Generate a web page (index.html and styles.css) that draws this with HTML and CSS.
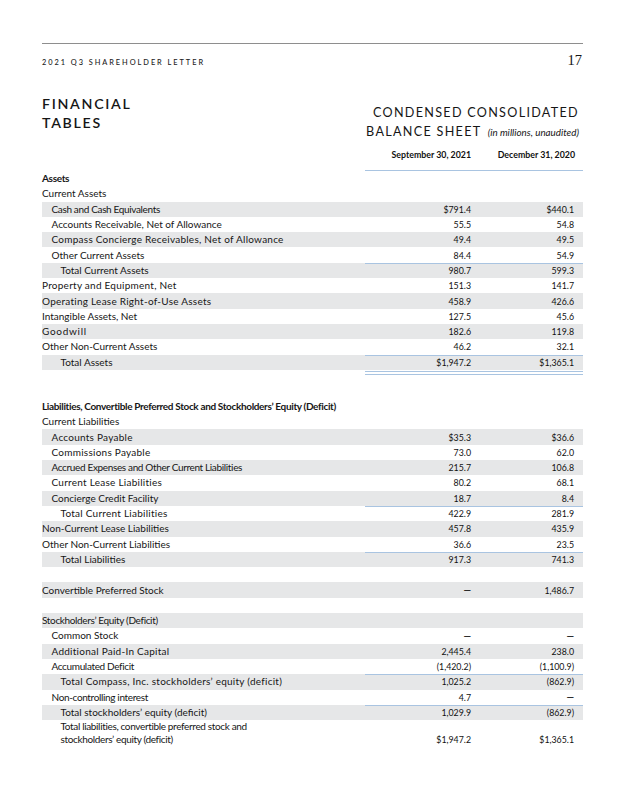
FILE: index.html
```html
<!DOCTYPE html>
<html lang="en">
<head>
<meta charset="utf-8">
<title>2021 Q3 Shareholder Letter — Financial Tables</title>
<link rel="stylesheet" href="styles.css">
</head>
<body>
<div class="page">
  <header class="top">
    <span class="kicker">2021 Q3 SHAREHOLDER LETTER</span>
    <span class="pageno">17</span>
  </header>

  <section class="intro">
    <h1 class="section-title">FINANCIAL<br>TABLES</h1>
    <div class="sheet-title">
      <div class="st-line">CONDENSED CONSOLIDATED</div>
      <div class="st-line">BALANCE SHEET <em class="note">(in millions, unaudited)</em></div>
    </div>
  </section>

  <div class="tbl">
    <div class="row head">
      <div class="lab"></div>
      <div class="v">September 30, 2021</div>
      <div class="v">December 31, 2020</div>
    </div>

    <div class="row"><div class="lab b tight">Assets</div><div class="v"></div><div class="v"></div></div>
    <div class="row"><div class="lab">Current Assets</div><div class="v"></div><div class="v"></div></div>
    <div class="row g"><div class="lab l1 tight">Cash and Cash Equivalents</div><div class="v">$791.4</div><div class="v">$440.1</div></div>
    <div class="row"><div class="lab l1">Accounts Receivable, Net of Allowance</div><div class="v">55.5</div><div class="v">54.8</div></div>
    <div class="row g"><div class="lab l1 wide">Compass Concierge Receivables, Net of Allowance</div><div class="v">49.4</div><div class="v">49.5</div></div>
    <div class="row"><div class="lab l1">Other Current Assets</div><div class="v">84.4</div><div class="v">54.9</div></div>
    <div class="row g rule"><div class="lab l2">Total Current Assets</div><div class="v">980.7</div><div class="v">599.3</div></div>
    <div class="row"><div class="lab wide">Property and Equipment, Net</div><div class="v">151.3</div><div class="v">141.7</div></div>
    <div class="row g"><div class="lab wide">Operating Lease Right-of-Use Assets</div><div class="v">458.9</div><div class="v">426.6</div></div>
    <div class="row"><div class="lab">Intangible Assets, Net</div><div class="v">127.5</div><div class="v">45.6</div></div>
    <div class="row g"><div class="lab xwide">Goodwill</div><div class="v">182.6</div><div class="v">119.8</div></div>
    <div class="row"><div class="lab">Other Non-Current Assets</div><div class="v">46.2</div><div class="v">32.1</div></div>
    <div class="row g rule"><div class="lab l2">Total Assets</div><div class="v">$1,947.2</div><div class="v">$1,365.1</div></div>
    <div class="row dbl"><div class="lab"></div><div class="v"></div><div class="v"></div></div>

    <div class="row gap-top"><div class="lab b tight">Liabilities, Convertible Preferred Stock and Stockholders’ Equity (Deficit)</div></div>
    <div class="row"><div class="lab">Current Liabilities</div><div class="v"></div><div class="v"></div></div>
    <div class="row g"><div class="lab l1 wide">Accounts Payable</div><div class="v">$35.3</div><div class="v">$36.6</div></div>
    <div class="row"><div class="lab l1 wide">Commissions Payable</div><div class="v">73.0</div><div class="v">62.0</div></div>
    <div class="row g"><div class="lab l1 tight">Accrued Expenses and Other Current Liabilities</div><div class="v">215.7</div><div class="v">106.8</div></div>
    <div class="row"><div class="lab l1 wide">Current Lease Liabilities</div><div class="v">80.2</div><div class="v">68.1</div></div>
    <div class="row g"><div class="lab l1">Concierge Credit Facility</div><div class="v">18.7</div><div class="v">8.4</div></div>
    <div class="row rule"><div class="lab l2 wide">Total Current Liabilities</div><div class="v">422.9</div><div class="v">281.9</div></div>
    <div class="row g"><div class="lab">Non-Current Lease Liabilities</div><div class="v">457.8</div><div class="v">435.9</div></div>
    <div class="row"><div class="lab">Other Non-Current Liabilities</div><div class="v">36.6</div><div class="v">23.5</div></div>
    <div class="row g rule"><div class="lab l2">Total Liabilities</div><div class="v">917.3</div><div class="v">741.3</div></div>
    <div class="row"><div class="lab"></div><div class="v"></div><div class="v"></div></div>
    <div class="row g"><div class="lab">Convertible Preferred Stock</div><div class="v"><span class="dash">—</span></div><div class="v">1,486.7</div></div>
    <div class="row"><div class="lab"></div><div class="v"></div><div class="v"></div></div>
    <div class="row g"><div class="lab tight">Stockholders’ Equity (Deficit)</div><div class="v"></div><div class="v"></div></div>
    <div class="row"><div class="lab l1">Common Stock</div><div class="v"><span class="dash">—</span></div><div class="v"><span class="dash">—</span></div></div>
    <div class="row g"><div class="lab l1 wide">Additional Paid-In Capital</div><div class="v">2,445.4</div><div class="v">238.0</div></div>
    <div class="row"><div class="lab l1 tight">Accumulated Deficit</div><div class="v">(1,420.2)</div><div class="v">(1,100.9)</div></div>
    <div class="row g rule"><div class="lab l2 wide">Total Compass, Inc. stockholders’ equity (deficit)</div><div class="v">1,025.2</div><div class="v">(862.9)</div></div>
    <div class="row"><div class="lab l1 tight">Non-controlling interest</div><div class="v">4.7</div><div class="v"><span class="dash">—</span></div></div>
    <div class="row g rule"><div class="lab l2">Total stockholders’ equity (deficit)</div><div class="v">1,029.9</div><div class="v">(862.9)</div></div>
    <div class="row two"><div class="lab l2 tight">Total liabilities, convertible preferred stock and<br>stockholders’ equity (deficit)</div><div class="v">$1,947.2</div><div class="v">$1,365.1</div></div>
  </div>
</div>
</body>
</html>
```

FILE: styles.css
```css
* { box-sizing: border-box; }

html, body {
  margin: 0;
  padding: 0;
  background: #ffffff;
}

body {
  font-family: "Lato", "Noto Sans", "DejaVu Sans", sans-serif;
  color: #161616;
}

.page {
  width: 626px;
  padding: 43px 43px 0 42px;
}

.top {
  border-top: 1.5px solid #8e8e8e;
  display: flex;
  justify-content: space-between;
  align-items: baseline;
  padding-top: 8px;
  height: 31px;
}

.kicker {
  font-size: 7.4px;
  letter-spacing: 1.95px;
  font-weight: 500;
  color: #222;
}

.pageno {
  font-family: "Liberation Serif", "Times New Roman", serif;
  font-size: 14.5px;
  color: #161616;
  margin-right: 1px;
}

.intro {
  display: flex;
  justify-content: space-between;
  align-items: flex-start;
  margin-top: 20px;
  height: 56px;
}

.section-title {
  margin: 0;
  font-size: 14.2px;
  font-weight: 600;
  letter-spacing: 1.7px;
  line-height: 19px;
  color: #161616;
}

.sheet-title {
  text-align: right;
  padding-top: 9px;
  padding-right: 4px;
}

.st-line {
  font-size: 12.6px;
  letter-spacing: 1.3px;
  line-height: 19px;
  color: #161616;
}

.note {
  font-size: 9.8px;
  letter-spacing: 0;
  font-style: italic;
  margin-left: 2px;
}

.tbl {
  width: 541px;
}

.row {
  display: grid;
  grid-template-columns: 1fr 106px 112px;
  height: 15.3px;
  align-items: center;
  font-size: 10px;
  white-space: nowrap;
}

.row.g { background: #e6e7e8; }

.row.head {
  height: 21px;
  align-items: start;
  font-weight: 700;
  font-size: 9.6px;
}

.row.head .v {
  box-shadow: inset 0 -1px 0 #a9c4e1;
  height: 21px;
  line-height: 10px;
  align-items: flex-start;
}

.row.head .v:last-child { padding-right: 8px; }

.lab {
  padding-left: 0;
  line-height: 15px;
  overflow: visible;
}

.l1 { padding-left: 9.5px; }
.l2 { padding-left: 18.5px; }

.b { font-weight: 700; }
.tight { letter-spacing: -0.35px; }
.wide { letter-spacing: 0.25px; }
.xwide { letter-spacing: 0.7px; }

.v {
  text-align: right;
  font-size: 8.8px;
  color: #111;
  height: 100%;
  display: flex;
  align-items: center;
  justify-content: flex-end;
}

.v:last-child { padding-right: 9px; }

.dash {
  font-family: "Lato", sans-serif;
  font-weight: 700;
  font-size: 9.5px;
  line-height: 10px;
}

.row.rule .v { box-shadow: inset 0 1px 0 #a9c4e1; }

.row.dbl { height: 5px; }
.row.dbl .v {
  border-top: 1px solid #a9c4e1;
  border-bottom: 1px solid #a9c4e1;
  height: 4px;
  margin-top: 1px;
}

.gap-top { margin-top: 24px; }

.row.two {
  height: 27px;
  align-items: end;
  padding-bottom: 1px;
}

.row.two .lab {
  line-height: 13px;
  white-space: normal;
}

.row.two .v {
  height: 13px;
}
```
